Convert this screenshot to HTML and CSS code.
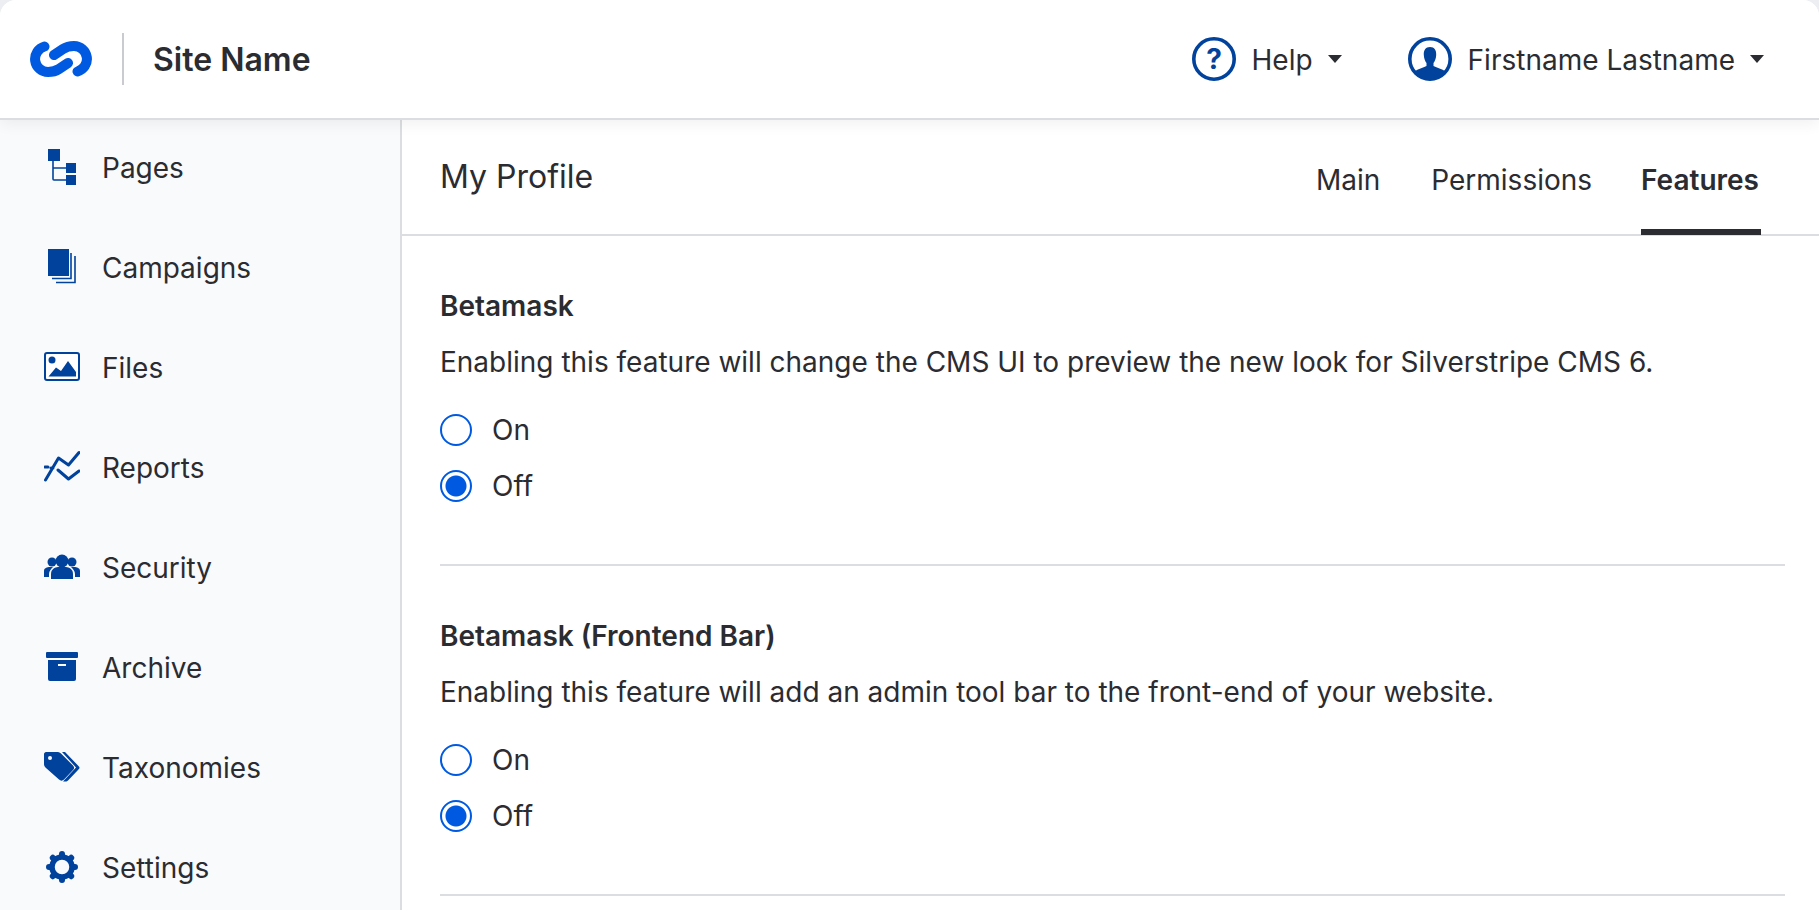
FILE: index.html
```html
<!DOCTYPE html>
<html lang="en">
<head>
  <meta charset="UTF-8">
  <title>My Profile</title>
  <link rel="stylesheet" href="styles.css">
</head>
<body>
  <div class="app">
    <header class="topbar">
      <svg class="logo" viewBox="0 0 62 36" aria-hidden="true">
        <path d="M14.500 5.500 A13 13 0 0 0 18 31 C23 31 26 30 29 28 L38 22" fill="none" stroke="#005ae1" stroke-width="10" stroke-linecap="round"/>
        <path d="M47.500 30.500 A13 13 0 0 0 44 5 C39 5 36 6 33 8 L24 14" fill="none" stroke="#005ae1" stroke-width="10" stroke-linecap="round"/>
      </svg>
      <span class="topbar-divider"></span>
      <span class="site-name">Site Name</span>
      <div class="topbar-right">
        <a class="topbar-link">
          <svg class="topbar-icon" viewBox="0 0 44 44" aria-hidden="true">
            <circle cx="22" cy="22" r="20.200" fill="none" stroke="#00429c" stroke-width="3.600"/>
            <text x="22" y="32" text-anchor="middle" class="help-mark">?</text>
          </svg>
          <span class="topbar-text">Help</span>
          <span class="caret"></span>
        </a>
        <a class="topbar-link">
          <svg class="topbar-icon" viewBox="0 0 44 44" aria-hidden="true">
            <circle cx="22" cy="22" r="20.200" fill="none" stroke="#00429c" stroke-width="3.600"/>
            <path d="M22 10 C17.500 10 15.500 13.500 15.800 18 C16 21.500 17 24 18.500 26 V29 C15 31 10 32 6.500 34.500 C10 39 16 41 22 41 C28 41 34 39 37.500 34.500 C34 32 29 31 25.500 29 V26 C27 24 28 21.500 28.200 18 C28.500 13.500 26.500 10 22 10 Z" fill="#00429c"/>
          </svg>
          <span class="topbar-text">Firstname Lastname</span>
          <span class="caret"></span>
        </a>
      </div>
    </header>

    <div class="layout">
      <nav class="sidebar">
        <a class="nav-item">
          <svg class="nav-icon" viewBox="0 0 36 36">
            <path d="M4 0 H16 V12 H4 Z M22 14 H32 V24 H22 Z M22 26 H32 V36 H22 Z" fill="#00429c"/>
            <path d="M9 12 V30 Q9 31 10 31 H22 M9 19 H22" fill="none" stroke="#00429c" stroke-width="1.600"/>
          </svg>
          <span>Pages</span>
        </a>
        <a class="nav-item">
          <svg class="nav-icon" viewBox="0 0 36 36">
            <rect x="4" y="0" width="21" height="27" fill="#00429c"/>
            <path d="M27 4 V29.500 H8 M31 7 V33.500 H12" fill="none" stroke="#00429c" stroke-width="1.600"/>
          </svg>
          <span>Campaigns</span>
        </a>
        <a class="nav-item">
          <svg class="nav-icon" viewBox="0 0 36 30">
            <rect x="1" y="1" width="34" height="27" rx="2" fill="#fff" stroke="#00429c" stroke-width="2"/>
            <circle cx="8" cy="8" r="3.500" fill="#00429c"/>
            <path d="M4.500 24.500 L12 15.500 L17 19 L24 9 L32 20 V24.500 Z" fill="#00429c"/>
          </svg>
          <span>Files</span>
        </a>
        <a class="nav-item">
          <svg class="nav-icon" viewBox="0 0 36 32">
            <path d="M1.500 29 L14.500 7 L24.500 14 L35 1.500 M14 19 L24.500 28 L35 20 M1 16 H4 M7 17 H9" fill="none" stroke="#00429c" stroke-width="3" stroke-linecap="round" stroke-linejoin="round"/>
          </svg>
          <span>Reports</span>
        </a>
        <a class="nav-item">
          <svg class="nav-icon" viewBox="0 0 36 26">
            <circle cx="18" cy="7" r="6.500" fill="#00429c"/>
            <path d="M7 25 V20 C7 15 11 13.500 14 13 H22 C25 13.500 29 15 29 20 V25 Z" fill="#00429c"/>
            <circle cx="8" cy="8" r="4.500" fill="#00429c"/>
            <circle cx="28" cy="8" r="4.500" fill="#00429c"/>
            <path d="M0 23 V17 C0 14 3 13 6 13 H9 C7 15 5 17 5 20 V23 Z M36 23 V17 C36 14 33 13 30 13 H27 C29 15 31 17 31 20 V23 Z" fill="#00429c"/>
          </svg>
          <span>Security</span>
        </a>
        <a class="nav-item">
          <svg class="nav-icon" viewBox="0 0 36 30">
            <rect x="2" y="0" width="32" height="6" rx="1" fill="#00429c"/>
            <path d="M4 8 H32 V27 A2 2 0 0 1 30 29 H6 A2 2 0 0 1 4 27 Z" fill="#00429c"/>
            <rect x="14" y="12" width="8" height="2" fill="#f9fafc"/>
          </svg>
          <span>Archive</span>
        </a>
        <a class="nav-item">
          <svg class="nav-icon" viewBox="0 0 36 30">
            <path d="M2 0 H14 C15 0 16 .5 17 1.500 L29 13.500 C30.500 15 30.500 16.500 29 18 L20 27.500 C18.500 29 16.500 29 15 27.500 L2 16 C.5 14.500 0 13.500 0 12 V2 C0 1 1 0 2 0 Z" fill="#00429c"/>
            <circle cx="6" cy="6" r="2" fill="#f9fafc"/>
            <path d="M18 0 H21 L34 13.500 C36 15.500 36 16 34 18 L24 28.500 C23 29.500 22 29.500 21 29.500 H19 L32 15.500 Z" fill="#00429c"/>
          </svg>
          <span>Taxonomies</span>
        </a>
        <a class="nav-item">
          <svg class="nav-icon" viewBox="-2 -2 36 36">
            <circle cx="16" cy="16" r="10" fill="none" stroke="#00429c" stroke-width="5.500"/>
            <path d="M16 3 V5 M16 27 V29 M3 16 H5 M27 16 H29 M6.800 6.800 L8 8 M24 24 L25.200 25.200 M6.800 25.200 L8 24 M24 8 L25.200 6.800" stroke="#00429c" stroke-width="6" stroke-linecap="round"/>
          </svg>
          <span>Settings</span>
        </a>
      </nav>

      <main class="content">
        <div class="content-head">
          <h1>My Profile</h1>
          <div class="tabs">
            <a class="tab">Main</a>
            <a class="tab">Permissions</a>
            <a class="tab tab-active">Features</a>
          </div>
        </div>

        <section class="feature">
          <h2>Betamask</h2>
          <p>Enabling this feature will change the CMS UI to preview the new look for Silverstripe CMS 6.</p>
          <div class="radio-row"><span class="radio"></span>On</div>
          <div class="radio-row"><span class="radio radio-checked"></span>Off</div>
        </section>

        <section class="feature">
          <h2>Betamask (Frontend Bar)</h2>
          <p>Enabling this feature will add an admin tool bar to the front-end of your website.</p>
          <div class="radio-row"><span class="radio"></span>On</div>
          <div class="radio-row"><span class="radio radio-checked"></span>Off</div>
        </section>
      </main>
    </div>
  </div>
</body>
</html>
```

FILE: styles.css
```css
* {
  box-sizing: border-box;
}
html, body {
  height: 100%;
}
body {
  margin: 0;
  overflow: hidden;
  background: #eceef1;
  font-family: Inter, "Liberation Sans", sans-serif;
  color: #2b2c31;
}
.app {
  height: 910px;
  display: flex;
  flex-direction: column;
  overflow: hidden;
  border-radius: 16px 16px 0 0;
  background: #fff;
}
.topbar {
  height: 120px;
  flex: none;
  display: flex;
  align-items: center;
  padding: 0 55px 0 30px;
  background: #fff;
  border-bottom: 2px solid #dcdde0;
  box-shadow: 0 4px 14px rgba(0, 0, 0, .06);
  position: relative;
  z-index: 1;
}
.logo {
  width: 62px;
  height: 36px;
}
.topbar-divider {
  width: 2px;
  height: 52px;
  margin: 0 29px 0 30px;
  background: #c9cbd1;
}
.site-name {
  font-size: 32px;
  font-weight: 600;
}
.topbar-right {
  margin-left: auto;
  display: flex;
  align-items: center;
  gap: 66px;
}
.topbar-link {
  display: flex;
  align-items: center;
  font-size: 28px;
}
.topbar-text {
  padding-top: 2px;
}
.topbar-icon {
  width: 44px;
  height: 44px;
  margin-right: 16px;
}
.help-mark {
  font-family: Inter, sans-serif;
  font-size: 28px;
  font-weight: 700;
  fill: #00429c;
}
.caret {
  margin-left: 15px;
  border-left: 7px solid transparent;
  border-right: 7px solid transparent;
  border-top: 8px solid #2b2c31;
}
.layout {
  flex: 1;
  display: flex;
  min-height: 0;
}
.sidebar {
  width: 402px;
  flex: none;
  background: #f9fafc;
  border-right: 2px solid #dcdde0;
}
.nav-item {
  height: 100px;
  display: flex;
  align-items: center;
  padding-left: 44px;
  font-size: 28px;
}
.nav-item:first-child {
  margin-top: -2px;
}
.nav-icon {
  width: 36px;
  height: 36px;
  margin: -3px 22px 0 0;
  flex: none;
}
.content {
  flex: 1;
  min-width: 0;
}
.content-head {
  height: 116px;
  display: flex;
  align-items: center;
  justify-content: space-between;
  padding: 0 58px 0 38px;
  border-bottom: 2px solid #dcdde0;
}
h1 {
  margin: 0 0 2px;
  font-size: 32px;
  font-weight: 400;
}
.tabs {
  display: flex;
  gap: 51px;
}
.tab {
  display: flex;
  align-items: center;
  padding-top: 6px;
  height: 116px;
  font-size: 28px;
}
.tab-active {
  margin-left: -2px;
  padding-right: 2px;
  font-weight: 600;
  box-shadow: inset 0 -6px 0 #2b2c31;
}
.feature {
  margin: 0 34px 0 38px;
  height: 330px;
  padding-top: 54px;
  border-bottom: 2px solid #dcdde0;
}
h2 {
  margin: 0;
  font-size: 28px;
  font-weight: 600;
  line-height: 32px;
}
.feature p {
  margin: 24px 0;
  font-size: 28px;
  line-height: 32px;
}
.radio-row {
  height: 56px;
  display: flex;
  align-items: center;
  font-size: 28px;
}
.radio {
  width: 32px;
  height: 32px;
  margin-right: 20px;
  border: 2px solid #005ae1;
  border-radius: 50%;
  background: #fff;
}
.radio-checked {
  background: radial-gradient(circle, #005ae1 0, #005ae1 10px, #fff 11px);
}
```
